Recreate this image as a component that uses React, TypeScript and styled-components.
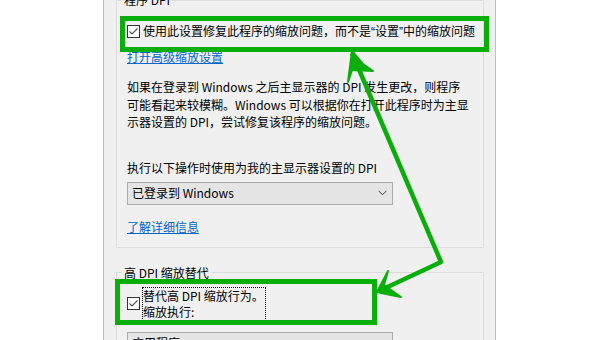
import React from "react";
import styled, { createGlobalStyle } from "styled-components";

const GlobalStyle = createGlobalStyle`
  html, body {
    margin: 0;
    padding: 0;
    background: #ffffff;
  }
  body {
    font-family: "Noto Sans CJK SC", "Noto Sans", sans-serif;
    font-size: 12px;
    color: #000000;
  }
`;

const Page = styled.div`
  position: relative;
  width: 600px;
  height: 340px;
  overflow: hidden;
`;

const Window = styled.div`
  margin-left: 103px;
  width: 393px;
  height: 340px;
  box-sizing: border-box;
  background: #f0f0f0;
  border-left: 1px solid #d9bd72;
  border-right: 1px solid #d9bd72;
  padding: 0 11px 0 12px;
  display: flex;
  flex-direction: column;
`;

const Group = styled.fieldset<{ $top: number; $pad: number }>`
  margin: ${({ $top }) => $top}px 0 0;
  padding: ${({ $pad }) => $pad}px 10px 12px;
  border: 1px solid #dcdcdc;
  display: flex;
  flex-direction: column;
  align-items: flex-start;
  min-width: 0;
`;

const Legend = styled.legend`
  margin-left: -5px;
  padding: 0 2px;
  line-height: 16px;
  white-space: nowrap;
`;

const CheckRow = styled.div`
  display: flex;
  align-items: center;
  gap: 3px;
  line-height: 16px;
  white-space: nowrap;
`;

const Box = styled.span`
  width: 13px;
  height: 13px;
  box-sizing: border-box;
  border: 1px solid #333333;
  background: #ffffff;
  display: flex;
  align-items: center;
  justify-content: center;
  flex-shrink: 0;
`;

const Quote = styled.span`
  font-family: "Liberation Sans", sans-serif;
`;

const Link = styled.a<{ $gap: number }>`
  margin-top: ${({ $gap }) => $gap}px;
  color: #0066cc;
  text-decoration: underline;
  line-height: 16px;
  cursor: pointer;
`;

const Para = styled.p`
  margin: 13px 0 0;
  line-height: 17.5px;
  white-space: nowrap;
`;

const Label = styled.div`
  margin-top: 29px;
  line-height: 16px;
  white-space: nowrap;
`;

const Select = styled.div<{ $gap: number }>`
  margin-top: ${({ $gap }) => $gap}px;
  width: 266px;
  height: 23px;
  box-sizing: border-box;
  flex-shrink: 0;
  border: 1px solid #acacac;
  background: #e5e5e5;
  display: flex;
  align-items: center;
  justify-content: space-between;
  padding: 0 5px 0 4px;
  line-height: 16px;
`;

const FocusLabel = styled.span`
  border: 1px dotted #000000;
  padding: 0 1px 0 0;
  line-height: 16px;
  margin-left: -1px;
`;

const Overlay = styled.svg`
  position: absolute;
  left: 0;
  top: 0;
  pointer-events: none;
`;

const Check = () => (
  <svg width="11" height="11" viewBox="0 0 11 11">
    <polyline points="1.5,5.5 4,8 9.5,2.5" fill="none" stroke="#555" strokeWidth="1.2" />
  </svg>
);

const Chevron = () => (
  <svg width="9" height="6" viewBox="0 0 9 6">
    <polyline points="0.5,0.8 4.5,4.8 8.5,0.8" fill="none" stroke="#404040" strokeWidth="1" />
  </svg>
);

const GREEN = "#0aae0a";

const Annotations = () => (
  <Overlay width="600" height="340" viewBox="0 0 600 340">
    <rect x="122.5" y="18.5" width="364" height="31" fill="none" stroke={GREEN} strokeWidth="5" />
    <rect x="117.5" y="281.5" width="257" height="41" fill="none" stroke={GREEN} strokeWidth="5" />
    <polyline
      points="352,53 441,262 379,291"
      fill="none"
      stroke={GREEN}
      strokeWidth="4.5"
      strokeLinejoin="round"
    />
    <polygon points="352,51 348,82 352,70 373,71 363,64" fill={GREEN} stroke={GREEN} strokeWidth="2" strokeLinejoin="round" />
    <polygon points="377,292 388,271 384,285 401,297 386,294" fill={GREEN} stroke={GREEN} strokeWidth="2" strokeLinejoin="round" />
  </Overlay>
);

export default function App() {
  return (
    <Page>
      <GlobalStyle />
      <Window>
        <Group $top={-8} $pad={15}>
          <Legend>程序 DPI</Legend>
          <CheckRow>
            <Box>
              <Check />
            </Box>
            <span>
              使用此设置修复此程序的缩放问题，而不是<Quote>“</Quote>设置<Quote>”</Quote>中的缩放问题
            </span>
          </CheckRow>
          <Link $gap={9}>打开高级缩放设置</Link>
          <Para>
            如果在登录到 Windows 之后主显示器的 DPI 发生更改，则程序
            <br />
            可能看起来较模糊。Windows 可以根据你在打开此程序时为主显
            <br />
            示器设置的 DPI，尝试修复该程序的缩放问题。
          </Para>
          <Label>执行以下操作时使用为我的主显示器设置的 DPI</Label>
          <Select $gap={6}>
            <span>已登录到 Windows</span>
            <Chevron />
          </Select>
          <Link $gap={14}>了解详细信息</Link>
        </Group>
        <Group $top={17} $pad={6}>
          <Legend>高 DPI 缩放替代</Legend>
          <CheckRow>
            <Box>
              <Check />
            </Box>
            <FocusLabel>
              替代高 DPI 缩放行为。
              <br />
              缩放执行:
            </FocusLabel>
          </CheckRow>
          <Select $gap={11}>
            <span>应用程序</span>
            <Chevron />
          </Select>
        </Group>
      </Window>
      <Annotations />
    </Page>
  );
}
